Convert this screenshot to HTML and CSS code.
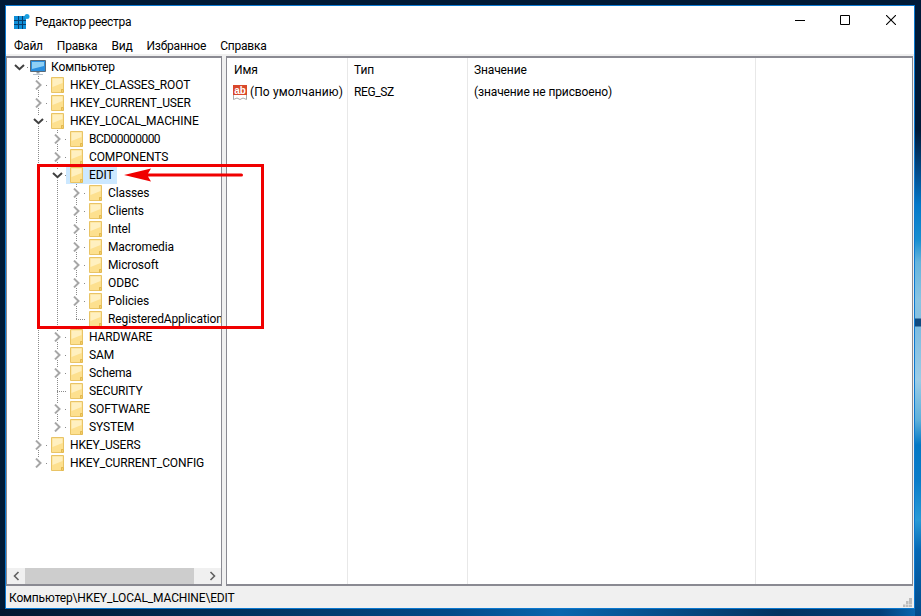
FILE: index.html
```html
<!DOCTYPE html>
<html lang="ru">
<head>
<meta charset="utf-8">
<title>Редактор реестра</title>
<link rel="stylesheet" href="styles.css">
</head>
<body>
<svg class="defs" width="0" height="0" aria-hidden="true">
  <defs>
    <symbol id="folder" viewBox="0 0 13 16">
      <path d="M.5.5H12.5V12.5H10.5V15.5H.5Z" fill="#fde08f" stroke="#e9c466"/>
      <path d="M1.500 1.500H11.500V6L1.500 10Z" fill="#fff0c0"/>
      <path d="M10.500 12.500V15.500H12.500V12.500Z" fill="#f3cd6b" stroke="#e3b94f"/>
    </symbol>
    <symbol id="right" viewBox="0 0 11 10"><rect width="11" height="10" fill="#fff"/><path d="M3 .6 7.500 5 3 9.400" fill="none" stroke="#a6a6a6" stroke-width="2"/></symbol>
    <symbol id="down" viewBox="0 0 11 10"><rect width="11" height="10" fill="#fff"/><path d="M1 3 5.500 7.200 10 3" fill="none" stroke="#404040" stroke-width="2"/></symbol>
  </defs>
</svg>
<div class="desktop">
  <div class="window">
    <header class="titlebar">
      <svg class="appicon" width="16" height="16" viewBox="0 0 16 16">
        <path d="M0 2H12V15H0Z" fill="#0f8fd8"/>
        <path d="M4.500 2V15M8.500 2V15M0 6.500H12M0 10.500H12" stroke="#063f70" stroke-width="1"/>
        <circle cx="13" cy="2.500" r="2.500" fill="#1a9fe0"/>
      </svg>
      <span class="title">Редактор реестра</span>
      <div class="controls">
        <span class="ctl"><svg width="10" height="10" viewBox="0 0 10 10"><path d="M0 5.500H10" stroke="#000"/></svg></span>
        <span class="ctl"><svg width="10" height="10" viewBox="0 0 10 10"><path d="M.5.500H9.500V9.500H.5Z" fill="none" stroke="#000"/></svg></span>
        <span class="ctl"><svg width="10" height="10" viewBox="0 0 10 10"><path d="M0 0 10 10M10 0 0 10" stroke="#000" stroke-width="1.100"/></svg></span>
      </div>
    </header>
    <nav class="menu">
      <span>Файл</span><span>Правка</span><span>Вид</span><span>Избранное</span><span>Справка</span>
    </nav>
    <main class="panes">
      <section class="treepane">
        <div class="tree">
          <div class="row">
            <span class="exp dots"><svg class="chev" width="11" height="10"><use href="#down"/></svg></span>
            <span class="item root">
              <svg class="pc" width="16" height="15" viewBox="0 0 16 15">
                <path d="M.5.500H15.500V11.500H.5Z" fill="#2a8fe0" stroke="#5a6a78"/>
                <path d="M2 2H14V6L2 9Z" fill="#8fd0f5"/>
                <path d="M6.500 12H9.500V13.500H6.500Z" fill="#8a96a0"/>
                <path d="M3 14H13V15H3Z" fill="#b8c2cc"/>
              </svg>
              <span class="label">Компьютер</span>
            </span>
          </div>
          <div class="row sub"><span class="exp v dots"><svg class="chev" width="11" height="10"><use href="#right"/></svg></span><span class="item"><svg class="fld" width="13" height="16"><use href="#folder"/></svg><span class="label">HKEY_CLASSES_ROOT</span></span></div>
          <div class="row sub"><span class="exp v dots"><svg class="chev" width="11" height="10"><use href="#right"/></svg></span><span class="item"><svg class="fld" width="13" height="16"><use href="#folder"/></svg><span class="label">HKEY_CURRENT_USER</span></span></div>
          <div class="row sub"><span class="exp v dots"><svg class="chev" width="11" height="10"><use href="#down"/></svg></span><span class="item"><svg class="fld" width="13" height="16"><use href="#folder"/></svg><span class="label">HKEY_LOCAL_MACHINE</span></span></div>

          <div class="row sub"><span class="guide v"></span><span class="exp v dots"><svg class="chev" width="11" height="10"><use href="#right"/></svg></span><span class="item"><svg class="fld" width="13" height="16"><use href="#folder"/></svg><span class="label digits">BCD00000000</span></span></div>
          <div class="row sub"><span class="guide v"></span><span class="exp v dots"><svg class="chev" width="11" height="10"><use href="#right"/></svg></span><span class="item"><svg class="fld" width="13" height="16"><use href="#folder"/></svg><span class="label">COMPONENTS</span></span></div>
          <div class="row sub"><span class="guide v"></span><span class="exp v dots"><svg class="chev" width="11" height="10"><use href="#down"/></svg></span><span class="item selected"><svg class="fld" width="13" height="16"><use href="#folder"/></svg><span class="label">EDIT</span></span></div>

          <div class="row sub"><span class="guide v"></span><span class="guide v"></span><span class="exp v dots"><svg class="chev" width="11" height="10"><use href="#right"/></svg></span><span class="item"><svg class="fld" width="13" height="16"><use href="#folder"/></svg><span class="label">Classes</span></span></div>
          <div class="row sub"><span class="guide v"></span><span class="guide v"></span><span class="exp v dots"><svg class="chev" width="11" height="10"><use href="#right"/></svg></span><span class="item"><svg class="fld" width="13" height="16"><use href="#folder"/></svg><span class="label">Clients</span></span></div>
          <div class="row sub"><span class="guide v"></span><span class="guide v"></span><span class="exp v dots"><svg class="chev" width="11" height="10"><use href="#right"/></svg></span><span class="item"><svg class="fld" width="13" height="16"><use href="#folder"/></svg><span class="label">Intel</span></span></div>
          <div class="row sub"><span class="guide v"></span><span class="guide v"></span><span class="exp v dots"><svg class="chev" width="11" height="10"><use href="#right"/></svg></span><span class="item"><svg class="fld" width="13" height="16"><use href="#folder"/></svg><span class="label">Macromedia</span></span></div>
          <div class="row sub"><span class="guide v"></span><span class="guide v"></span><span class="exp v dots"><svg class="chev" width="11" height="10"><use href="#right"/></svg></span><span class="item"><svg class="fld" width="13" height="16"><use href="#folder"/></svg><span class="label">Microsoft</span></span></div>
          <div class="row sub"><span class="guide v"></span><span class="guide v"></span><span class="exp v dots"><svg class="chev" width="11" height="10"><use href="#right"/></svg></span><span class="item"><svg class="fld" width="13" height="16"><use href="#folder"/></svg><span class="label">ODBC</span></span></div>
          <div class="row sub"><span class="guide v"></span><span class="guide v"></span><span class="exp v dots"><svg class="chev" width="11" height="10"><use href="#right"/></svg></span><span class="item"><svg class="fld" width="13" height="16"><use href="#folder"/></svg><span class="label">Policies</span></span></div>
          <div class="row sub"><span class="guide v"></span><span class="guide v"></span><span class="exp leaf last"></span><span class="item"><svg class="fld" width="13" height="16"><use href="#folder"/></svg><span class="label">RegisteredApplications</span></span></div>

          <div class="row sub"><span class="guide v"></span><span class="exp v dots"><svg class="chev" width="11" height="10"><use href="#right"/></svg></span><span class="item"><svg class="fld" width="13" height="16"><use href="#folder"/></svg><span class="label">HARDWARE</span></span></div>
          <div class="row sub"><span class="guide v"></span><span class="exp v dots"><svg class="chev" width="11" height="10"><use href="#right"/></svg></span><span class="item"><svg class="fld" width="13" height="16"><use href="#folder"/></svg><span class="label">SAM</span></span></div>
          <div class="row sub"><span class="guide v"></span><span class="exp v dots"><svg class="chev" width="11" height="10"><use href="#right"/></svg></span><span class="item"><svg class="fld" width="13" height="16"><use href="#folder"/></svg><span class="label">Schema</span></span></div>
          <div class="row sub"><span class="guide v"></span><span class="exp leaf v"></span><span class="item"><svg class="fld" width="13" height="16"><use href="#folder"/></svg><span class="label">SECURITY</span></span></div>
          <div class="row sub"><span class="guide v"></span><span class="exp v dots"><svg class="chev" width="11" height="10"><use href="#right"/></svg></span><span class="item"><svg class="fld" width="13" height="16"><use href="#folder"/></svg><span class="label">SOFTWARE</span></span></div>
          <div class="row sub"><span class="guide v"></span><span class="exp vtop dots"><svg class="chev" width="11" height="10"><use href="#right"/></svg></span><span class="item"><svg class="fld" width="13" height="16"><use href="#folder"/></svg><span class="label">SYSTEM</span></span></div>

          <div class="row sub"><span class="exp v dots"><svg class="chev" width="11" height="10"><use href="#right"/></svg></span><span class="item"><svg class="fld" width="13" height="16"><use href="#folder"/></svg><span class="label">HKEY_USERS</span></span></div>
          <div class="row sub"><span class="exp vtop dots"><svg class="chev" width="11" height="10"><use href="#right"/></svg></span><span class="item"><svg class="fld" width="13" height="16"><use href="#folder"/></svg><span class="label">HKEY_CURRENT_CONFIG</span></span></div>
        </div>
        <div class="hscroll">
          <span class="arrow"><svg width="7" height="10" viewBox="0 0 7 10"><path d="M5.500 1 1.500 5 5.500 9" fill="none" stroke="#606060" stroke-width="1.600"/></svg></span>
          <span class="track"><span class="thumb"></span></span>
          <span class="arrow"><svg width="7" height="10" viewBox="0 0 7 10"><path d="M1.500 1 5.500 5 1.500 9" fill="none" stroke="#606060" stroke-width="1.600"/></svg></span>
        </div>
      </section>
      <section class="listpane">
        <div class="col col-name">
          <div class="head">Имя</div>
          <div class="cell name">
            <svg class="abicon" width="16" height="16" viewBox="0 0 16 16">
              <path d="M1.500 1.500H11L14.500 4.500V15.500L11 14 8 15.500 5 14 1.500 15.500Z" fill="#fff" stroke="#a8a8a8"/>
              <rect x="1" y="1" width="14" height="10" fill="#d9482b"/>
              <text x="8" y="9.500" class="abtext" text-anchor="middle">ab</text>
            </svg>
            <span>(По умолчанию)</span>
          </div>
        </div>
        <div class="col col-type">
          <div class="head">Тип</div>
          <div class="cell regsz">REG_SZ</div>
        </div>
        <div class="col col-value">
          <div class="head">Значение</div>
          <div class="cell">(значение не присвоено)</div>
        </div>
        <div class="col col-rest"></div>
      </section>
    </main>
    <footer class="status">
      <span>Компьютер\HKEY_LOCAL_MACHINE\EDIT</span>
      <svg class="grip" width="9" height="9" viewBox="0 0 9 9">
        <path d="M6 0H9V3H6ZM3 3H5.500V6H3ZM6 3H9V6H6ZM0 6.500H2.500V9H0ZM3 6.500H5.500V9H3ZM6 6.500H9V9H6Z" fill="#bdbdbd"/>
      </svg>
    </footer>
  </div>
  <div class="callout"></div>
  <svg class="pointer" width="120" height="16" viewBox="0 0 120 16">
    <path d="M0 8 27 1.500 24 6.500H117.500A1.500 1.500 0 0 1 117.500 9.500H24L27 14.500Z" fill="#f00000"/>
  </svg>
</div>
</body>
</html>
```
FILE: styles.css
```css
* { box-sizing: border-box; }
html, body { margin: 0; padding: 0; }
body {
  width: 921px;
  height: 616px;
  overflow: hidden;
  font-family: Roboto, "Noto Sans", sans-serif;
  font-size: 12px;
  letter-spacing: -0.12px;
  color: #000;
}
.defs { position: absolute; }
.desktop {
  position: relative;
  width: 921px;
  height: 616px;
  padding: 5px 6px 7px 5px;
  display: flex;
  background:
    linear-gradient(180deg, #001a38 0, #001a38 130px, #034f90 175px, #0478c8 205px, #1a8fd0 240px, #66b4dc 262px, #8ac4e2 300px, #86c0e0 318px, #0f4a80 319px, #0f4a80 326px, #7ebce0 327px, #9ccce6 380px, #5fb0da 420px, #0478c4 445px, #0a7cc8 480px, #2a9ad6 520px, #0668b4 550px, #024a8a 616px) right top / 6px 100% no-repeat,
    linear-gradient(90deg, #00152e 0, #00213f 100px, #034a88 450px, #0a66ae 560px, #02325f 780px, #033e78 880px, #0a6cb8 921px) left bottom / 100% 7px no-repeat,
    #001a36;
}
.window {
  flex: 1;
  display: flex;
  flex-direction: column;
  border: 1px solid #0a78d0;
  background: #fff;
  min-width: 0;
}
.titlebar {
  height: 32px;
  display: flex;
  align-items: center;
  padding-left: 8px;
  flex: none;
}
.appicon { flex: none; margin-right: 5px; }
.title { flex: 1; letter-spacing: -0.3px; }
.controls { display: flex; align-self: stretch; }
.ctl {
  width: 46px;
  display: flex;
  align-items: center;
  justify-content: center;
  padding-bottom: 4px;
}
.ctl:first-child { width: 44px; }
.menu {
  height: 18px;
  display: flex;
  gap: 14px;
  align-items: center;
  padding: 0 0 2px 8px;
  flex: none;
  letter-spacing: -0.2px;
  background: linear-gradient(#fff 16px, #f0f0f0 16px);
}
.panes {
  flex: 1;
  display: flex;
  gap: 4px;
  padding-right: 1px;
  background: #f0f0f0;
  min-height: 0;
}
.treepane, .listpane {
  background: #fff;
  border-style: solid;
  border-width: 2px 1px 2px 1px;
  border-color: #8a8a92;
}
.treepane {
  width: 216px;
  display: flex;
  flex-direction: column;
  flex: none;
}
.tree {
  flex: 1;
  overflow: hidden;
  padding: 0 0 0 3px;
  min-height: 0;
}
.row {
  height: 18px;
  display: flex;
  align-items: center;
  white-space: nowrap;
}
.row.sub { padding-left: 19px; }
.guide, .exp {
  width: 19px;
  height: 18px;
  flex: none;
  position: relative;
  display: block;
}
.v {
  background-image: repeating-linear-gradient(180deg, #8a8a8a 0 1px, transparent 1px 2px);
  background-size: 1px 100%;
  background-position: 9px 0;
  background-repeat: no-repeat;
}
.dots {
  background-image:
    repeating-linear-gradient(90deg, #8a8a8a 0 1px, transparent 1px 2px),
    repeating-linear-gradient(180deg, #8a8a8a 0 1px, transparent 1px 2px);
  background-size: 3px 1px, 1px 100%;
  background-position: 17px 9px, 9px 0;
  background-repeat: no-repeat;
}
.exp:not(.v).dots { background-size: 3px 1px, 0 0; }
.exp.vtop.dots { background-size: 3px 1px, 1px 9px; }
.leaf {
  background-image:
    repeating-linear-gradient(90deg, #8a8a8a 0 1px, transparent 1px 2px),
    repeating-linear-gradient(180deg, #8a8a8a 0 1px, transparent 1px 2px);
  background-size: 12px 1px, 1px 100%;
  background-position: 9px 9px, 9px 0;
  background-repeat: no-repeat;
}
.leaf.last { background-size: 12px 1px, 1px 10px; }
.chev { position: absolute; left: 4px; top: 4px; display: block; }
.item {
  display: flex;
  align-items: center;
  height: 17px;
  margin-left: -1px;
  padding-left: 4px;
  padding-right: 4px;
  flex: none;
}
.item.root { padding-left: 2px; }
.item.selected { background: #cce8ff; }
.fld { flex: none; display: block; }
.pc { flex: none; display: block; }
.label { margin-left: 6px; }
.label.digits { letter-spacing: -0.55px; }
.root .label { margin-left: 5px; }
.hscroll {
  height: 16px;
  display: flex;
  flex: none;
  background: #f0f0f0;
}
.arrow {
  width: 18px;
  flex: none;
  display: flex;
  align-items: center;
  justify-content: center;
}
.track { flex: 1; display: block; }
.thumb { display: block; width: 169px; height: 100%; background: #cdcdcd; }
.listpane {
  flex: 1;
  display: flex;
  min-width: 0;
}
.col { border-right: 1px solid #e8e8e8; flex: none; }
.col-name { width: 121px; }
.col-type { width: 120px; }
.col-value { width: 288px; }
.col-rest { flex: 1; border-right: 0; }
.head { height: 24px; padding: 4px 0 0 6px; line-height: 16px; }
.col-name .head { padding-left: 7px; }
.cell { height: 20px; padding-left: 6px; line-height: 20px; white-space: nowrap; }
.cell.name { display: flex; align-items: center; padding-left: 5px; letter-spacing: 0.1px; }
.cell.regsz { letter-spacing: -0.4px; }
.abicon { flex: none; margin-right: 2px; }
.abtext { font-family: "Liberation Sans", sans-serif; font-size: 10px; font-weight: 700; fill: #fff; letter-spacing: 0; }
.status {
  height: 22px;
  flex: none;
  display: flex;
  align-items: center;
  justify-content: space-between;
  background: #f0f0f0;
  padding: 1px 2px 0 3px;
  letter-spacing: -0.15px;
}
.grip { align-self: flex-end; margin-bottom: 1px; }
.callout {
  position: absolute;
  left: 37px;
  top: 164px;
  width: 227px;
  height: 165px;
  border: 3px solid #f00000;
}
.pointer { position: absolute; left: 124px; top: 167px; }
```
